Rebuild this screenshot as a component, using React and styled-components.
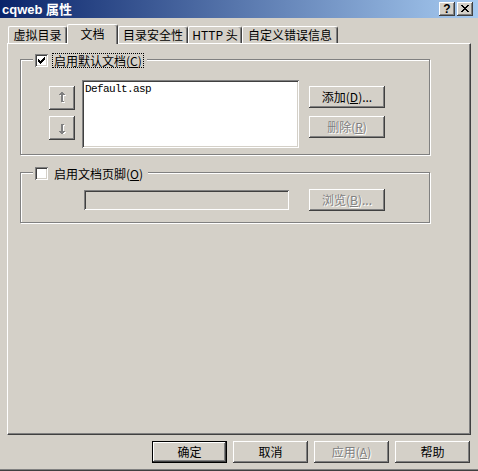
import React from 'react'
import styled, { createGlobalStyle, css } from 'styled-components'

const GlobalStyle = createGlobalStyle`
  html, body {
    margin: 0;
    padding: 0;
    background: #d4d0c8;
  }
`

// bevels
const raised = css`
  box-shadow: inset -1px -1px 0 #404040, inset 1px 1px 0 #ffffff,
    inset -2px -2px 0 #808080, inset 2px 2px 0 #d4d0c8;
`

const sunken = css`
  box-shadow: inset 1px 1px 0 #808080, inset -1px -1px 0 #ffffff,
    inset 2px 2px 0 #404040, inset -2px -2px 0 #d4d0c8;
`

const Window = styled.div`
    width: 478px;
    height: 471px;
    box-sizing: border-box;
    background: #d4d0c8;
    border-bottom: 1px solid #404040;
    box-shadow: inset 0 -1px 0 #808080;
    display: flex;
    flex-direction: column;
    font-family: "Noto Sans CJK SC", sans-serif;
    font-size: 12px;
    color: #000000;
    overflow: hidden;
`

const TitleBar = styled.div`
    height: 18px;
    flex-shrink: 0;
    display: flex;
    align-items: center;
    padding: 0 5px 0 2px;
    background: linear-gradient(to right, #0a246a, #a6caf0);
    color: #ffffff;
`

const TitleText = styled.div`
    flex: 1;
    font-family: "Liberation Sans", "Noto Sans CJK SC", sans-serif;
    font-weight: 700;
    font-size: 13px;
    line-height: 15px;
`

const CaptionButtons = styled.div`
    display: flex;
    gap: 2px;
`

const CaptionButton = styled.div`
    width: 16px;
    height: 14px;
    background: #d4d0c8;
    ${raised};
    display: flex;
    align-items: center;
    justify-content: center;
    color: #000;
    font-family: "Liberation Sans", sans-serif;
    font-weight: 700;
    font-size: 12px;
    line-height: 12px;
    padding-bottom: 1px;
    box-sizing: border-box;
`

const Body = styled.div`
    flex: 1;
    display: flex;
    flex-direction: column;
    padding: 6px 7px 0 7px;
`

const TabRow = styled.div`
    display: flex;
    align-items: flex-end;
    height: 19px;
    padding-left: 1px;
`

const Tab = styled.div`
    width: ${p => p.$w}px;
    height: ${p => (p.$active ? 20 : 17)}px;
    margin-bottom: ${p => (p.$active ? -1 : 0)}px;
    box-sizing: border-box;
    position: relative;
    z-index: ${p => (p.$active ? 1 : 0)};
    background: #d4d0c8;
    border-top: 1px solid #ffffff;
    border-left: 1px solid #ffffff;
    border-right: 1px solid #404040;
    border-radius: 2px 3px 0 0;
    box-shadow: inset -1px 0 0 #808080;
    display: flex;
    align-items: center;
    justify-content: center;
    padding-bottom: ${p => (p.$active ? 2 : 0)}px;
    line-height: 14px;
    white-space: nowrap;
`

const Panel = styled.div`
    height: 392px;
    box-sizing: border-box;
    border-top: 1px solid #ffffff;
    border-left: 1px solid #ffffff;
    border-right: 1px solid #404040;
    border-bottom: 1px solid #404040;
    box-shadow: inset -1px -1px 0 #808080;
    padding: 15px 0 0 12px;
`

const GroupBox = styled.div`
    position: relative;
    width: 410px;
    height: ${p => p.$h}px;
    box-sizing: border-box;
    border: 1px solid #808080;
    box-shadow: 1px 1px 0 #ffffff, inset 1px 1px 0 #ffffff;
    margin-top: ${p => p.$mt || 0}px;
`

// legend sits over the top border line of the group
const Legend = styled.div`
    position: absolute;
    top: -7px;
    left: 12px;
    height: 15px;
    padding: 0 3px 0 2px;
    background: #d4d0c8;
    display: flex;
    align-items: center;
`

const CheckBox = styled.div`
    width: 13px;
    height: 13px;
    box-sizing: border-box;
    background: #ffffff;
    ${sunken};
    display: flex;
    align-items: center;
    justify-content: center;
`

const Label = styled.span`
    margin-left: 4px;
    height: 13px;
    line-height: 13px;
    padding: 0 1px;
    border: 1px dotted ${p => (p.$focus ? '#000' : 'transparent')};
    white-space: nowrap;
`

const Row = styled.div`
    display: flex;
    align-items: ${p => p.$align || 'flex-start'};
    padding: ${p => p.$pad};
`

const ArrowColumn = styled.div`
    display: flex;
    flex-direction: column;
    gap: 6px;
    margin-top: 6px;
`

const ArrowButton = styled.div`
    width: 26px;
    height: 24px;
    background: #d4d0c8;
    ${raised};
    display: flex;
    align-items: center;
    justify-content: center;
`

const ListBox = styled.div`
    width: 217px;
    height: 68px;
    box-sizing: border-box;
    margin-left: 7px;
    background: #ffffff;
    ${sunken};
    padding: 3px 3px;
    font-family: "Liberation Mono", monospace;
    font-size: 11px;
    letter-spacing: -0.6px;
    line-height: 12px;
`

const ButtonColumn = styled.div`
    display: flex;
    flex-direction: column;
    gap: 8px;
    margin-top: 6px;
    margin-left: 10px;
`

const Button = styled.div`
    width: ${p => p.$w || 75}px;
    height: 22px;
    box-sizing: border-box;
    background: #d4d0c8;
    ${raised};
    ${p => p.$default && css`
      box-shadow: inset 0 0 0 1px #000000, inset -2px -2px 0 #404040,
        inset 2px 2px 0 #ffffff, inset -3px -3px 0 #808080;
    `}
    display: flex;
    align-items: center;
    justify-content: center;
    line-height: 14px;
    white-space: nowrap;
    color: ${p => (p.$disabled ? '#808080' : '#000000')};
    text-shadow: ${p => (p.$disabled ? '1px 1px 0 #ffffff' : 'none')};
`

const TextField = styled.div`
    width: 205px;
    height: 20px;
    box-sizing: border-box;
    background: #d4d0c8;
    ${sunken};
    margin-right: 20px;
    margin-bottom: 1px;
`

const ButtonBar = styled.div`
    display: flex;
    justify-content: flex-end;
    gap: 6px;
    margin-top: 6px;
    padding-right: 1px;
`

function Check() {
    return (
        <svg width="7" height="7" viewBox="0 0 7 7" shapeRendering="crispEdges">
            <path d="M6 0h1v3h-1v1h-1v1h-1v1h-1v1h-1v-1h-1v-1h-1v-3h1v1h1v1h1v-1h1v-1h1z" fill="#000" />
        </svg>
    )
}

function Arrow({ down }) {
    const shape = 'M3 0h2v1h1v1h1v1h-2v6h1v1h-3v-7h-2v-1h1v-1h1z'
    return (
        <svg width="9" height="12" viewBox="0 0 9 12" shapeRendering="crispEdges"
            style={down ? { transform: 'scaleY(-1)' } : undefined}>
            <path d={shape} fill="#ffffff" transform={down ? 'translate(1,-1)' : 'translate(1,1)'} />
            <path d={shape} fill="#808080" />
        </svg>
    )
}

function CloseGlyph() {
    return (
        <svg width="8" height="7" viewBox="0 0 8 7" shapeRendering="crispEdges">
            <path d="M0 0h2v1h1v1h2v-1h1v-1h2v1h-1v1h-1v1h-1v1h1v1h1v1h1v1h-2v-1h-1v-1h-2v1h-1v1h-2v-1h1v-1h1v-1h1v-1h-1v-1h-1v-1h-1z" fill="#000" />
        </svg>
    )
}

const tabs = [
    { label: '虚拟目录', w: 59 },
    { label: '文档', w: 51, active: true },
    { label: '目录安全性', w: 70 },
    { label: 'HTTP 头', w: 54 },
    { label: '自定义错误信息', w: 96 },
]

export default function App() {
    return (
        <>
            <GlobalStyle />
            <Window>
                <TitleBar>
                    <TitleText>cqweb 属性</TitleText>
                    <CaptionButtons>
                        <CaptionButton>?</CaptionButton>
                        <CaptionButton><CloseGlyph /></CaptionButton>
                    </CaptionButtons>
                </TitleBar>

                <Body>
                    <TabRow>
                        {tabs.map(t => (
                            <Tab key={t.label} $w={t.w} $active={t.active}>{t.label}</Tab>
                        ))}
                    </TabRow>

                    <Panel>
                        <GroupBox $h={96}>
                            <Legend>
                                <CheckBox><Check /></CheckBox>
                                <Label $focus>启用默认文档(<u>C</u>)</Label>
                            </Legend>
                            <Row $pad="20px 0 0 28px">
                                <ArrowColumn>
                                    <ArrowButton><Arrow /></ArrowButton>
                                    <ArrowButton><Arrow down /></ArrowButton>
                                </ArrowColumn>
                                <ListBox>Default.asp</ListBox>
                                <ButtonColumn>
                                    <Button $w={76}>添加(<u>D</u>)...</Button>
                                    <Button $w={76} $disabled>删除(<u>R</u>)</Button>
                                </ButtonColumn>
                            </Row>
                        </GroupBox>

                        <GroupBox $h={51} $mt={17}>
                            <Legend>
                                <CheckBox />
                                <Label>启用文档页脚(<u>O</u>)</Label>
                            </Legend>
                            <Row $pad="16px 0 0 63px" $align="flex-end">
                                <TextField />
                                <Button $w={76} $disabled>浏览(<u>B</u>)...</Button>
                            </Row>
                        </GroupBox>
                    </Panel>

                    <ButtonBar>
                        <Button $default>确定</Button>
                        <Button>取消</Button>
                        <Button $disabled>应用(<u>A</u>)</Button>
                        <Button>帮助</Button>
                    </ButtonBar>
                </Body>
            </Window>
        </>
    )
}
